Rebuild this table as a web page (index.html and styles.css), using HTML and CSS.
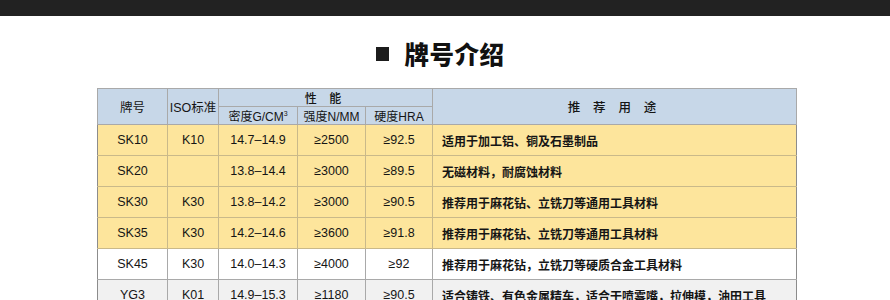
FILE: index.html
```html
<!DOCTYPE html>
<html lang="zh-CN">
<head>
<meta charset="utf-8">
<link rel="stylesheet" href="styles.css">
</head>
<body>
<div class="topbar"></div>
<div class="title"><span class="sq"></span><h1>牌号介绍</h1></div>
<table class="grades">
<colgroup>
<col class="c1"><col class="c2"><col class="c3"><col class="c4"><col class="c5"><col class="c6">
</colgroup>
<thead>
<tr class="h1">
<th rowspan="2">牌号</th>
<th rowspan="2">ISO标准</th>
<th colspan="3" class="sp">性 能</th>
<th rowspan="2" class="sp wide">推 荐 用 途</th>
</tr>
<tr class="h2">
<th>密度G/CM<sup>3</sup></th>
<th>强度N/MM</th>
<th>硬度HRA</th>
</tr>
</thead>
<tbody>
<tr class="y"><td>SK10</td><td>K10</td><td>14.7–14.9</td><td>≥2500</td><td>≥92.5</td><td class="d">适用于加工铝、铜及石墨制品</td></tr>
<tr class="y"><td>SK20</td><td></td><td>13.8–14.4</td><td>≥3000</td><td>≥89.5</td><td class="d">无磁材料，耐腐蚀材料</td></tr>
<tr class="y"><td>SK30</td><td>K30</td><td>13.8–14.2</td><td>≥3000</td><td>≥90.5</td><td class="d">推荐用于麻花钻、立铣刀等通用工具材料</td></tr>
<tr class="y"><td>SK35</td><td>K30</td><td>14.2–14.6</td><td>≥3600</td><td>≥91.8</td><td class="d">推荐用于麻花钻、立铣刀等通用工具材料</td></tr>
<tr class="w"><td>SK45</td><td>K30</td><td>14.0–14.3</td><td>≥4000</td><td>≥92</td><td class="d">推荐用于麻花钻，立铣刀等硬质合金工具材料</td></tr>
<tr class="g"><td>YG3</td><td>K01</td><td>14.9–15.3</td><td>≥1180</td><td>≥90.5</td><td class="d">适合铸铁、有色金属精车，适合干喷雾嘴，拉伸模，油田工具</td></tr>
</tbody>
</table>
</body>
</html>
```

FILE: styles.css
```css
html, body {
  margin: 0;
  padding: 0;
  background: #ffffff;
}
body {
  font-family: "Liberation Sans", "Noto Sans CJK SC", Arial, sans-serif;
  color: #151515;
}
.topbar {
  height: 16px;
  background: #222222;
}
.title {
  display: flex;
  align-items: center;
  justify-content: center;
  gap: 16px;
  height: 72px;
  padding-right: 10px;
  box-sizing: border-box;
  padding-top: 2px;
}
.sq {
  width: 13px;
  height: 14px;
  background: #1c1c1c;
  margin-top: 1px;
}
.title h1 {
  margin: 0;
  font-family: "Noto Sans CJK SC", sans-serif;
  font-weight: 900;
  font-size: 24.5px;
  letter-spacing: 0.5px;
  color: #111;
}
.grades {
  margin-left: 97px;
  width: 699px;
  table-layout: fixed;
  border-collapse: collapse;
  border: 1px solid #8c8c8c;
  font-size: 12.5px;
}
.c1 { width: 70px; }
.c2 { width: 51px; }
.c3 { width: 79px; }
.c4 { width: 68px; }
.c5 { width: 67px; }
.c6 { width: 364px; }
th, td {
  border: 1px solid #a9a9a9;
  text-align: center;
  padding: 0;
  white-space: nowrap;
  overflow: hidden;
}
th {
  background: #c7d7e8;
  font-weight: normal;
  font-family: "Liberation Sans", "Noto Sans CJK SC", sans-serif;
}
.h1 th { height: 17px; }
.h2 th { height: 15px; font-size: 12px; }
.h1 th[rowspan] { font-size: 12.5px; }
th.sp { letter-spacing: 5px; font-family: "Noto Sans CJK SC", sans-serif; font-weight: 500; font-size: 12px; }
sup { font-size: 7px; vertical-align: 5px; line-height: 0; }
td {
  height: 30px;
  font-weight: 500;
}
td.d {
  text-align: left;
  padding-left: 9px;
  font-family: "Noto Sans CJK SC", sans-serif;
  font-weight: 700;
  font-size: 12px;
}
tr.y td { background: #fde59c; border-color: #c9b98a; }
tr.w td { background: #ffffff; }
tr.g td { background: #f1f1f1; }
tr.y td:first-child, tr.w td:first-child, tr.g td:first-child { border-left-color: #8c8c8c; }
tr.y td:last-child, tr.w td:last-child, tr.g td:last-child { border-right-color: #8c8c8c; }
```
